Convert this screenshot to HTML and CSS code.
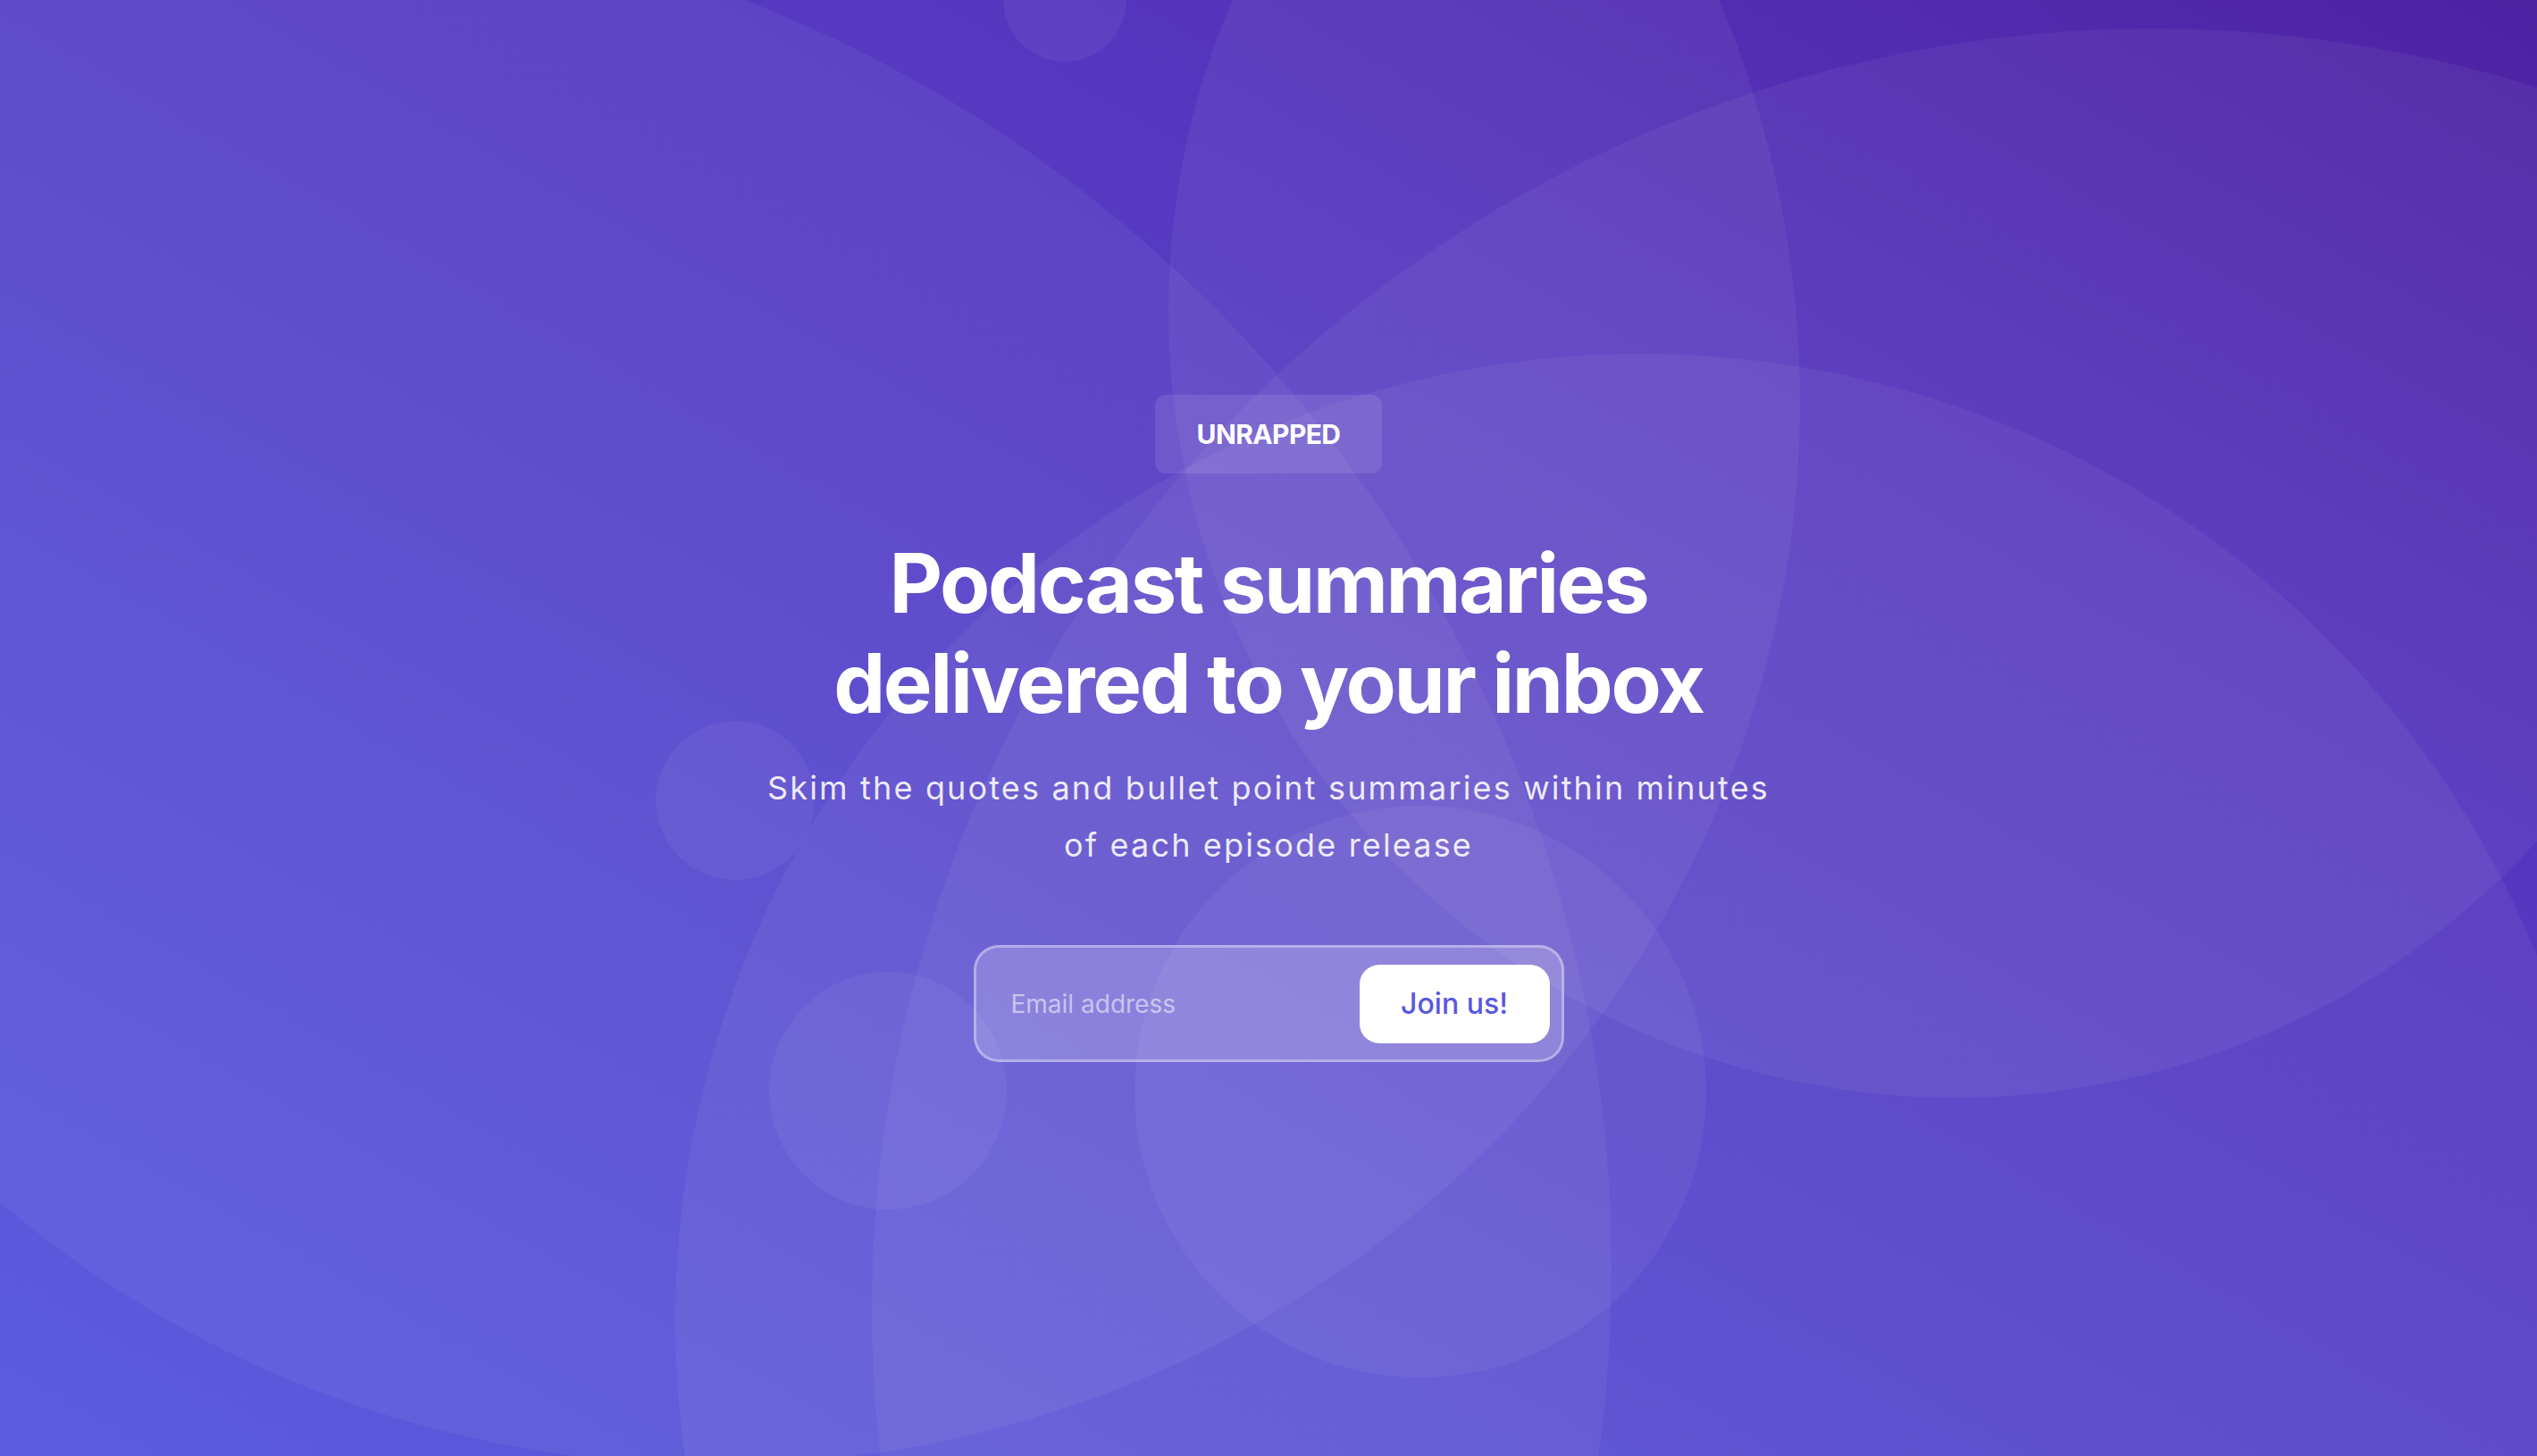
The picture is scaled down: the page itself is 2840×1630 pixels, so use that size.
FILE: index.html
```html
<!DOCTYPE html>
<html lang="en">
<head>
<meta charset="utf-8">
<title>Unrapped — Podcast summaries delivered to your inbox</title>
<link rel="stylesheet" href="styles.css">
</head>
<body>
<main class="hero">
  <svg class="hero-shapes" viewBox="0 0 2840 1630" preserveAspectRatio="none" aria-hidden="true">
    <g class="shape">
      <ellipse cx="800" cy="450" rx="1215" ry="1190"/>
      <circle cx="280" cy="1420" r="1524"/>
      <circle cx="2410" cy="1466" r="1434"/>
      <circle cx="2189" cy="348" r="881"/>
      <circle cx="1838" cy="1478" r="1082"/>
      <circle cx="1192" cy="0" r="69"/>
      <circle cx="823" cy="896" r="89"/>
      <circle cx="994" cy="1221" r="133"/>
      <circle cx="1590" cy="1222" r="320"/>
    </g>
  </svg>
  <div class="hero-content">
    <span class="badge">UNRAPPED</span>
    <h1 class="title">Podcast summaries delivered to your inbox</h1>
    <p class="subtitle">Skim the quotes and bullet point summaries within minutes of each episode release</p>
    <form class="signup" onsubmit="return false">
      <input class="signup-email" type="email" placeholder="Email address">
      <button class="signup-button" type="submit">Join us!</button>
    </form>
  </div>
</main>
</body>
</html>
```
FILE: styles.css
```css
* {
  box-sizing: border-box;
}

html, body {
  margin: 0;
  padding: 0;
}

body {
  font-family: Inter, "Noto Sans", "Liberation Sans", sans-serif;
  color: #ffffff;
  background: #5236c0;
}

.hero {
  position: relative;
  min-height: 100vh;
  display: flex;
  align-items: center;
  justify-content: center;
  overflow: hidden;
  background: linear-gradient(to top right, #5355de 0%, #4c2dbc 70%, #46169f 100%);
}

.hero-shapes {
  position: absolute;
  inset: 0;
  width: 100%;
  height: 100%;
}

.shape {
  fill: #ffffff;
  fill-opacity: 0.05;
}

.hero-content {
  position: relative;
  display: flex;
  flex-direction: column;
  align-items: center;
  text-align: center;
}

.badge {
  display: inline-flex;
  align-items: center;
  justify-content: center;
  height: 88px;
  padding: 0 47px;
  border-radius: 12px;
  background: rgba(255, 255, 255, 0.1);
  font-size: 30px;
  font-weight: 700;
  letter-spacing: -0.02em;
  line-height: 1;
}

.title {
  margin: 67px 0 0;
  max-width: 1100px;
  font-size: 92px;
  line-height: 112px;
  font-weight: 700;
  letter-spacing: -0.025em;
}

.subtitle {
  margin: 29px 0 0;
  max-width: 1160px;
  font-size: 36px;
  line-height: 64px;
  font-weight: 400;
  letter-spacing: 0.06em;
  color: rgba(255, 255, 255, 0.88);
}

.signup {
  margin-top: 80px;
  width: 661px;
  height: 131px;
  display: flex;
  align-items: center;
  gap: 12px;
  padding: 19px 13px 18px 13px;
  border: 3px solid rgba(255, 255, 255, 0.35);
  border-radius: 28px;
  background: rgba(255, 255, 255, 0.2);
}

.signup-email {
  flex: 1;
  min-width: 0;
  height: 88px;
  padding: 0 0 0 26px;
  border: 0;
  outline: none;
  background: transparent;
  font-family: inherit;
  font-size: 28px;
  color: #ffffff;
}

.signup-email::placeholder {
  color: rgba(255, 255, 255, 0.55);
}

.signup-button {
  flex: none;
  width: 213px;
  height: 88px;
  border: 0;
  border-radius: 22px;
  background: #ffffff;
  font-family: inherit;
  font-size: 32px;
  font-weight: 500;
  color: #5957e0;
  cursor: pointer;
}
```
